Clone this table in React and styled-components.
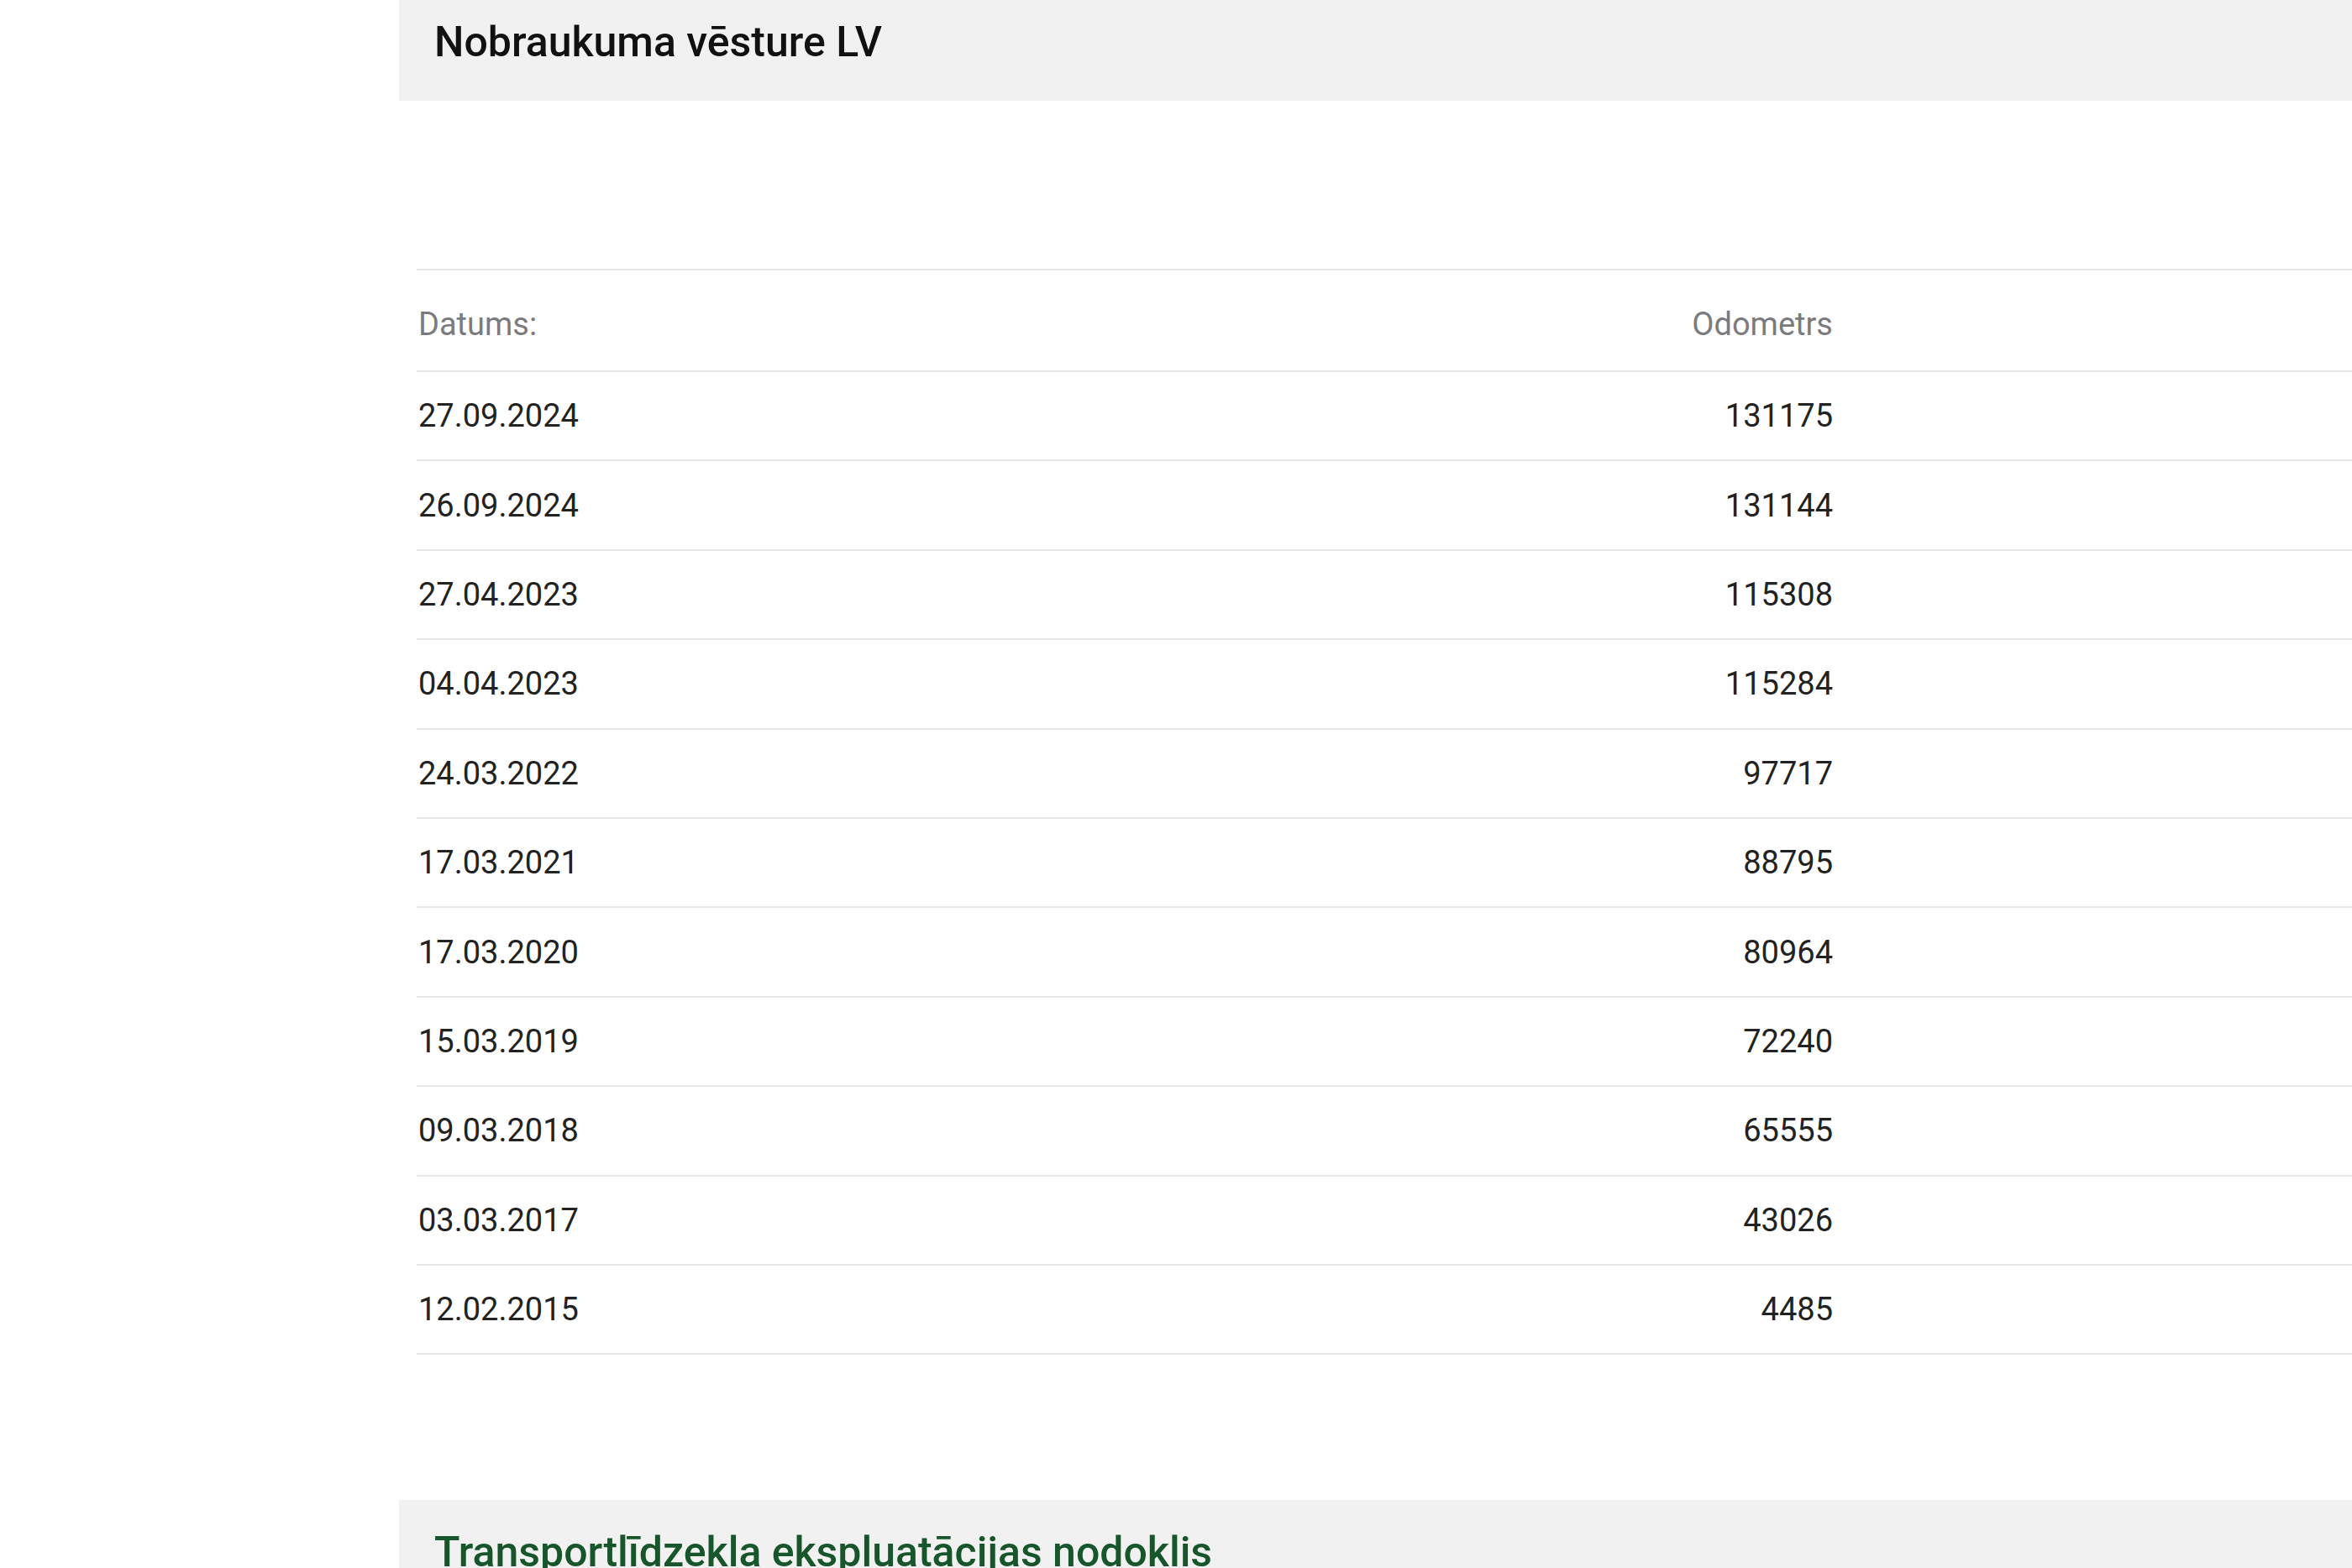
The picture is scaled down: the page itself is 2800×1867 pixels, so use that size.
import React from 'react';
import styled, { createGlobalStyle } from 'styled-components';

const GlobalStyle = createGlobalStyle`
    html, body {
        margin: 0;
        padding: 0;
        background: #ffffff;
    }
    body {
        font-family: Roboto, "Liberation Sans", Arial, sans-serif;
        color: #222222;
    }
`;

const Page = styled.div`
    width: 2800px;
    height: 1867px;
    overflow: hidden;
    box-sizing: border-box;
    padding-left: 475px;
    display: flex;
    flex-direction: column;
`;

const Panel = styled.div`
    background-color: #f1f1f1;
    box-sizing: border-box;
    padding: ${(p) => p.$pad};
    flex-shrink: 0;
`;

const PanelTitle = styled.h2`
    margin: 0;
    font-size: 50px;
    line-height: 56px;
    font-weight: 500;
    color: ${(p) => (p.$green ? '#17552a' : '#111111')};
`;

const Table = styled.div`
    margin: 200px 0 173px 21px;
    border-top: 2px solid #e6e6e6;
    flex-shrink: 0;
`;

const Row = styled.div`
    display: grid;
    grid-template-columns: 1fr 1fr 618px;
    align-items: center;
    box-sizing: border-box;
    height: ${(p) => (p.$head ? '121px' : '106.4px')};
    padding-top: ${(p) => (p.$head ? '9px' : '0')};
    border-bottom: 2px solid #e6e6e6;
    font-size: 38px;
    color: ${(p) => (p.$head ? '#7b7b7f' : '#222222')};
`;

const DateCell = styled.div`
    padding-left: 2px;
`;

const OdoCell = styled.div`
    text-align: right;
`;

const rows = [
    ['27.09.2024', '131175'],
    ['26.09.2024', '131144'],
    ['27.04.2023', '115308'],
    ['04.04.2023', '115284'],
    ['24.03.2022', '97717'],
    ['17.03.2021', '88795'],
    ['17.03.2020', '80964'],
    ['15.03.2019', '72240'],
    ['09.03.2018', '65555'],
    ['03.03.2017', '43026'],
    ['12.02.2015', '4485'],
];

const App = () => {
    return (
        <>
            <GlobalStyle />
            <Page>
                <Panel $pad="22px 42px 42px">
                    <PanelTitle>Nobraukuma vēsture LV</PanelTitle>
                </Panel>
                <Table>
                    <Row $head>
                        <DateCell>Datums:</DateCell>
                        <OdoCell>Odometrs</OdoCell>
                        <div />
                    </Row>
                    {rows.map(([date, odo]) => (
                        <Row key={date}>
                            <DateCell>{date}</DateCell>
                            <OdoCell>{odo}</OdoCell>
                            <div />
                        </Row>
                    ))}
                </Table>
                <Panel $pad="34px 42px 41px">
                    <PanelTitle $green>Transportlīdzekļa ekspluatācijas nodoklis</PanelTitle>
                </Panel>
            </Page>
        </>
    );
};

export default App;
